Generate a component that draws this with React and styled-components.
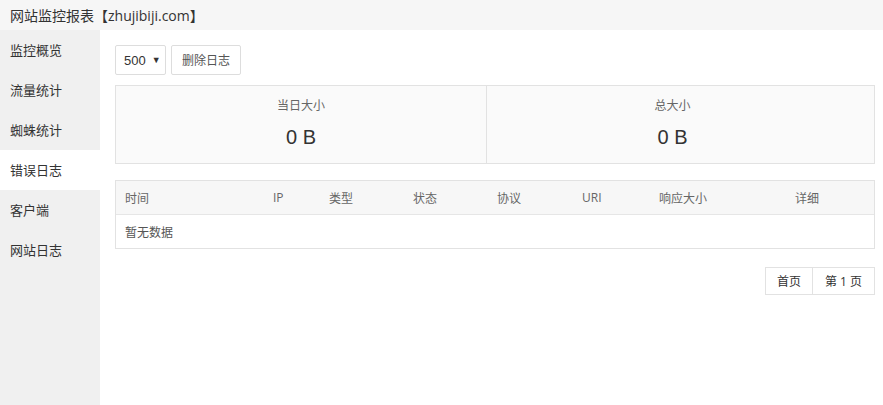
import React from "react";
import styled, { createGlobalStyle } from "styled-components";

const GlobalStyle = createGlobalStyle`
  html, body {
    margin: 0;
    padding: 0;
    background: #fff;
    font-family: "Open Sans", "Noto Sans CJK SC", sans-serif;
    color: #333;
  }
`;

const Page = styled.div`
  display: flex;
  flex-direction: column;
  height: 405px;
`;

const TopBar = styled.div`
  height: 30px;
  background: #f6f6f6;
  display: flex;
  align-items: center;
  padding-left: 10px;
  font-size: 14px;
  color: #333;
`;

const Body = styled.div`
  flex: 1;
  display: flex;
`;

const Sidebar = styled.div`
  width: 100px;
  background: #f0f0f0;
`;

const NavItem = styled.div`
  height: 40px;
  line-height: 40px;
  padding-left: 10px;
  font-size: 13px;
  color: #333;
  background: ${p => (p.active ? "#fff" : "transparent")};
`;

const Main = styled.div`
  flex: 1;
  padding: 15px 8px 15px 15px;
`;

const Toolbar = styled.div`
  display: flex;
  gap: 5px;
  height: 30px;
`;

const Select = styled.div`
  width: 51px;
  box-sizing: border-box;
  border: 1px solid #ddd;
  border-radius: 2px;
  display: flex;
  align-items: center;
  padding-left: 8px;
  font-size: 13px;
  font-family: "Liberation Sans", sans-serif;
  color: #333;
  gap: 6px;
`;

const Caret = styled.span`
  font-size: 9px;
  color: #333;
`;

const Button = styled.div`
  width: 70px;
  box-sizing: border-box;
  border: 1px solid #ddd;
  border-radius: 2px;
  display: flex;
  align-items: center;
  justify-content: center;
  font-size: 12px;
  color: #555;
`;

const Stats = styled.div`
  margin-top: 10px;
  height: 79px;
  box-sizing: border-box;
  border: 1px solid #e2e2e2;
  background: #fafafa;
  display: grid;
  grid-template-columns: 370px 1fr;
`;

const StatCell = styled.div`
  display: flex;
  flex-direction: column;
  align-items: center;
  padding-top: 12px;
  padding-right: ${p => (p.divider ? "16px" : "0")};
  border-left: ${p => (p.divider ? "1px solid #e2e2e2" : "none")};
`;

const StatLabel = styled.div`
  font-size: 12px;
  color: #666;
  line-height: 16px;
`;

const StatValue = styled.div`
  font-family: "Liberation Sans", sans-serif;
  font-size: 20px;
  color: #333;
  margin-top: 12px;
`;

const Table = styled.div`
  margin-top: 16px;
  border: 1px solid #e2e2e2;
`;

const cols = "148px 56px 84px 84px 85px 77px 136px 1fr";

const HeadRow = styled.div`
  display: grid;
  grid-template-columns: ${cols};
  height: 33px;
  background: #f7f7f7;
  border-bottom: 1px solid #e6e6e6;
`;

const Row = styled.div`
  height: 33px;
  display: flex;
  align-items: center;
  padding-left: 9px;
  font-size: 12px;
  color: #555;
`;

const Th = styled.div`
  display: flex;
  align-items: center;
  padding-left: 9px;
  font-size: 12px;
  color: #666;
`;

const Pager = styled.div`
  margin-top: 18px;
  display: flex;
  justify-content: flex-end;
`;

const PageBtn = styled.div`
  width: ${p => p.w}px;
  height: 28px;
  box-sizing: border-box;
  border: 1px solid #e2e2e2;
  border-left: ${p => (p.first ? "1px solid #e2e2e2" : "none")};
  display: flex;
  align-items: center;
  justify-content: center;
  font-size: 12px;
  color: #333;
`;

const headers = ["时间", "IP", "类型", "状态", "协议", "URI", "响应大小", "详细"];
const nav = ["监控概览", "流量统计", "蜘蛛统计", "错误日志", "客户端", "网站日志"];

export default function App() {
  return (
    <Page>
      <GlobalStyle />
      <TopBar>网站监控报表【zhujibiji.com】</TopBar>
      <Body>
        <Sidebar>
          {nav.map(n => (
            <NavItem key={n} active={n === "错误日志"}>
              {n}
            </NavItem>
          ))}
        </Sidebar>
        <Main>
          <Toolbar>
            <Select>
              500 <Caret>▼</Caret>
            </Select>
            <Button>删除日志</Button>
          </Toolbar>
          <Stats>
            <StatCell>
              <StatLabel>当日大小</StatLabel>
              <StatValue>0 B</StatValue>
            </StatCell>
            <StatCell divider>
              <StatLabel>总大小</StatLabel>
              <StatValue>0 B</StatValue>
            </StatCell>
          </Stats>
          <Table>
            <HeadRow>
              {headers.map(h => (
                <Th key={h}>{h}</Th>
              ))}
            </HeadRow>
            <Row>暂无数据</Row>
          </Table>
          <Pager>
            <PageBtn first w={48}>首页</PageBtn>
            <PageBtn w={62}>第 1 页</PageBtn>
          </Pager>
        </Main>
      </Body>
    </Page>
  );
}
